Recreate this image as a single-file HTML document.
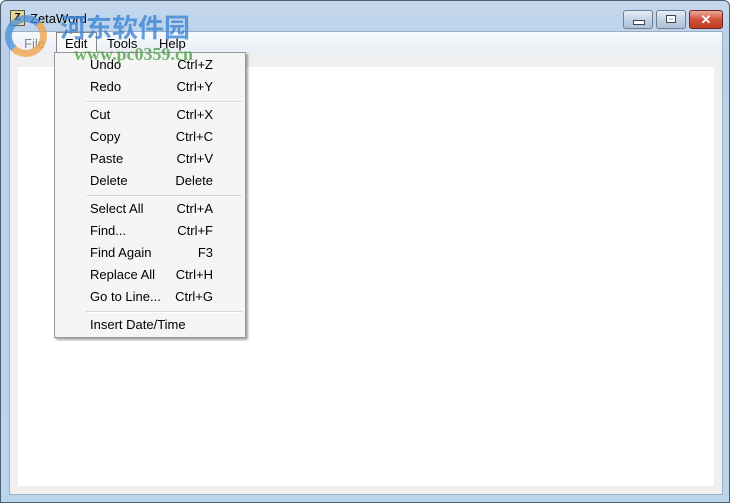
<!DOCTYPE html><html><head><style>
body{margin:0;width:730px;height:503px;overflow:hidden;font-family:"Liberation Sans","Noto Sans CJK SC",sans-serif;background:#fff}
.win{position:absolute;left:0;top:0;width:728px;height:501px;border:1px solid #4b5f73;border-radius:6px 6px 0 0;background:linear-gradient(#c6d8ec,#b9d1ea 40px,#bcd4ec);}
.client{position:absolute;left:8px;top:30px;width:712px;height:462px;background:#f0f0f0;border:1px solid #9aaec4}
.menubar{position:absolute;left:0;top:0;width:712px;height:22px;background:linear-gradient(#f7f9fc,#e9eef5)}
.mi{position:absolute;top:4px;font-size:13px;color:#000}
.edit{position:absolute;left:8px;top:35px;width:696px;height:419px;background:#fff}
.btn{position:absolute;top:9px;height:17px;border:1px solid #6d7e92;border-radius:3px;background:linear-gradient(#e8eff7,#c3d3e6 50%,#aec2da)}
.menu{position:absolute;left:54px;top:52px;width:190px;height:284px;background:#f5f5f5;border:1px solid #979797;box-shadow:2px 2px 2px rgba(0,0,0,.35)}
.row{position:absolute;left:35px;width:150px;font-size:13px;color:#000}
.row span{position:absolute;right:27px;top:0}
.sep{position:absolute;left:31px;width:156px;height:1px;background:#d7d7d7;border-bottom:1px solid #fff}
.wm{position:absolute;font-family:"Noto Sans CJK SC",sans-serif;font-weight:bold;color:#3d86d6;opacity:.8}
</style></head><body>
<div class="win">
<div style="position:absolute;left:9px;top:9px;width:13px;height:14px;border:1px solid #555;background:#e8d890;font-size:10px;line-height:13px;text-align:center;font-weight:bold">Z</div>
<div style="position:absolute;left:29px;top:10px;font-size:13px">ZetaWord</div>
<div class="btn" style="left:622px;width:28px"><div style="position:absolute;left:9px;top:9px;width:10px;height:3px;background:#fff;border:1px solid #444"></div></div>
<div class="btn" style="left:655px;width:28px"><div style="position:absolute;left:9px;top:4px;width:8px;height:6px;border:1px solid #444;box-shadow:inset 0 0 0 2px #fff"></div></div>
<div class="btn" style="left:688px;width:32px;background:linear-gradient(#e9a99a,#d2523c 50%,#c23a22);border-color:#6b2a1e;color:#fff;font-weight:bold;font-size:13px;text-align:center;line-height:17px">✕</div>
<div class="client">
<div class="menubar">
<div class="mi" style="left:14px;color:#888">File</div>
<div style="position:absolute;left:46px;top:0;width:39px;height:21px;border:1px solid #888;border-bottom:none;background:#f8f8f8"></div>
<div class="mi" style="left:55px">Edit</div>
<div class="mi" style="left:97px">Tools</div>
<div class="mi" style="left:149px">Help</div>
</div>
<div class="edit"></div>
</div>
</div>
<div class="menu">
<div class="row" style="top:4px">Undo<span>Ctrl+Z</span></div>
<div class="row" style="top:26px">Redo<span>Ctrl+Y</span></div>
<div class="sep" style="top:48px"></div>
<div class="row" style="top:54px">Cut<span>Ctrl+X</span></div>
<div class="row" style="top:76px">Copy<span>Ctrl+C</span></div>
<div class="row" style="top:98px">Paste<span>Ctrl+V</span></div>
<div class="row" style="top:120px">Delete<span>Delete</span></div>
<div class="sep" style="top:142px"></div>
<div class="row" style="top:148px">Select All<span>Ctrl+A</span></div>
<div class="row" style="top:170px">Find...<span>Ctrl+F</span></div>
<div class="row" style="top:192px">Find Again<span>F3</span></div>
<div class="row" style="top:214px">Replace All<span>Ctrl+H</span></div>
<div class="row" style="top:236px">Go to Line...<span>Ctrl+G</span></div>
<div class="sep" style="top:258px"></div>
<div class="row" style="top:264px">Insert Date/Time</div>
</div>
<div class="wm" style="left:60px;top:8px;font-size:26px">河东软件园</div>
<div class="wm" style="left:74px;top:44px;font-size:18px;color:#4fa24a;font-family:'Liberation Serif',serif">www.pc0359.cn</div>
<div style="position:absolute;left:5px;top:15px;width:42px;height:42px;border-radius:50%;border:7px solid #4a8fd8;border-right-color:#f0a040;border-bottom-color:#f0a040;opacity:.75;box-sizing:border-box"></div>
</body></html>
